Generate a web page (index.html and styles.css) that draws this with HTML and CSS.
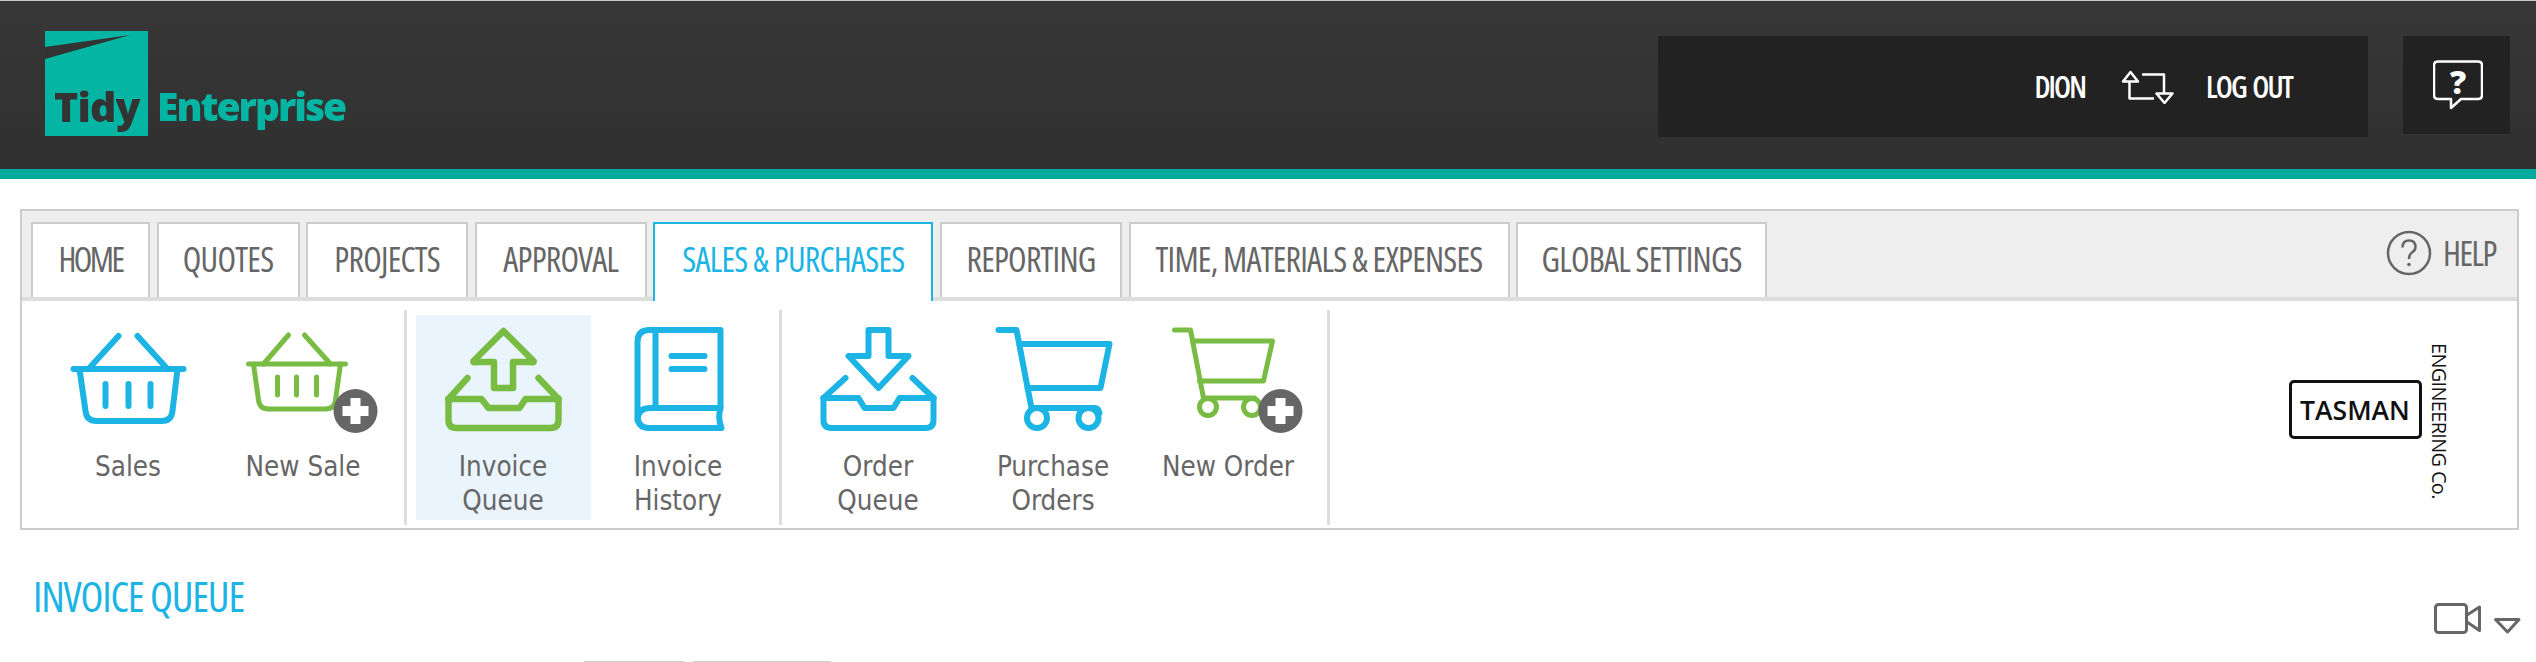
FILE: index.html
```html
<!DOCTYPE html>
<html lang="en">
<head>
<meta charset="utf-8">
<title>Invoice Queue</title>
<link rel="stylesheet" href="styles.css">
</head>
<body>
<header class="topbar">
  <div class="logo">
    <div class="logo-mark">
      <svg class="logo-wedge" viewBox="0 0 103 105"><polygon points="0,16 85,4 0,28" fill="#333"/></svg>
      <span class="logo-tidy">Tidy</span>
    </div>
    <span class="logo-name">Enterprise</span>
  </div>
  <div class="userbox">
    <span class="user-text">DION</span>
    <svg class="swap" viewBox="2123 69 54 34"><g fill="none" stroke="#fff" stroke-width="2.5" stroke-linejoin="round"><path d="M2132.5 71 L2125 80.5 H2140 Z"/><path d="M2131.5 80.5 V97.5 H2156"/><path d="M2144 73.5 H2166 V92"/><path d="M2158.5 92.5 H2174.5 L2166.5 102 Z"/></g></svg>
    <span class="user-text">LOG OUT</span>
  </div>
  <div class="helpbox">
    <div class="bubble">
      <svg class="bubble-shape" viewBox="2433 60 50 50"><path d="M2438 61.5 H2478 Q2482 61.5 2482 65.5 V95 Q2482 99 2478 99 H2461 L2451 108 V99 H2438 Q2434 99 2434 95 V65.5 Q2434 61.5 2438 61.5 Z" fill="none" stroke="#fff" stroke-width="2.5" stroke-linejoin="round"/></svg>
      <span class="bubble-q">?</span>
    </div>
  </div>
</header>

<section class="panel">
  <nav class="tabbar">
    <a class="tab tab-home">HOME</a>
    <a class="tab">QUOTES</a>
    <a class="tab">PROJECTS</a>
    <a class="tab">APPROVAL</a>
    <a class="tab tab-active">SALES &amp; PURCHASES</a>
    <a class="tab">REPORTING</a>
    <a class="tab">TIME, MATERIALS &amp; EXPENSES</a>
    <a class="tab">GLOBAL SETTINGS</a>
    <a class="help-link">
      <svg class="help-icon" viewBox="0 0 46 46"><circle cx="23" cy="23" r="21" fill="none" stroke="#666" stroke-width="2.5"/><path d="M16.5 17.5 Q16.5 10.5 23 10.5 Q29.5 10.5 29.5 17 Q29.5 20.5 26 22.5 Q23 24.5 23 29" fill="none" stroke="#666" stroke-width="2.5"/><circle cx="23" cy="34.5" r="1.8" fill="#666"/></svg>
      <span>HELP</span>
    </a>
  </nav>
  <div class="ribbon">
    <div class="group group-first">
      <a class="item">
        <svg class="item-icon" viewBox="40.5 315 175 135"><g class="ic ic-blue"><path d="M73 369 H183"/><path d="M88 369 L118 336 M137 336 L167 369"/><path d="M79 369 L85 411 Q86 421 96 421 H161 Q171 421 172 411 L177 369"/><path d="M105 384 V406 M128 384 V406 M150 384 V406"/></g></svg>
        <span class="item-label">Sales</span>
      </a>
      <a class="item">
        <svg class="item-icon" viewBox="215.5 315 175 135"><g class="ic ic-green ic-thin"><path d="M248 364 H345"/><path d="M263 364 L288 335 M304 335 L330 364"/><path d="M253 364 L258 400 Q259 409 268 409 H325 Q334 409 335 400 L340 364"/><path d="M277 377 V395 M296 377 V395 M316 377 V395"/></g><circle cx="355" cy="411" r="22" fill="#666"/><path d="M342 411 H368 M355 398 V424" stroke="#fff" stroke-width="10" fill="none"/></svg>
        <span class="item-label">New Sale</span>
      </a>
    </div>
    <div class="group">
      <a class="item item-selected">
        <svg class="item-icon" viewBox="415.5 315 175 135"><g class="ic ic-green ic-bold"><path d="M503 331 L533 361 Q534 363 530 362 H512.5 V388 H493.5 V362 H476 Q472 363 473 361 Z"/><path d="M448 399 H481 L488 408 H519 L525 399 H558"/><path d="M448 399 L467 378 M538 378 L558 399"/><path d="M448 399 V420 Q448 428 456 428 H550 Q558 428 558 420 V399"/></g></svg>
        <span class="item-label">Invoice<br>Queue</span>
      </a>
      <a class="item">
        <svg class="item-icon" viewBox="590.5 315 175 135"><g class="ic ic-blue"><path d="M720 330 H649 Q637 330 637 342 V416 Q637 428 649 428 H721 Q717 418 720 408 V330 Z"/><path d="M655 330 V408 M720 408 H650 Q637 408 637 420"/><path d="M671 356 H704 M671 369 H704"/></g></svg>
        <span class="item-label">Invoice<br>History</span>
      </a>
    </div>
    <div class="group group-last">
      <a class="item">
        <svg class="item-icon" viewBox="790.5 315 175 135"><g class="ic ic-blue"><path d="M868 356 V330 H888 V356 H908 L878 388 L848 356 Z"/><path d="M823 398 H858 L864 408 H893 L899 398 H933"/><path d="M823 398 L845 378 M912 378 L933 398"/><path d="M823 398 V420 Q823 428 831 428 H925 Q933 428 933 420 V398"/></g></svg>
        <span class="item-label">Order<br>Queue</span>
      </a>
      <a class="item">
        <svg class="item-icon" viewBox="965.5 315 175 135"><g class="ic ic-blue"><path d="M998 330 H1016 L1031 408 H1094 Q1098 408 1099 413"/><path d="M1019 344 H1109 L1100 388 H1027"/><circle cx="1036.5" cy="418" r="10"/><circle cx="1088" cy="418" r="10"/></g></svg>
        <span class="item-label">Purchase<br>Orders</span>
      </a>
      <a class="item">
        <svg class="item-icon" viewBox="1140.5 315 175 135"><g class="ic ic-green ic-thin"><path d="M1174 330 H1190 L1203 398 H1254"/><path d="M1192 341 H1272 L1263 381 H1199"/><circle cx="1207.5" cy="407" r="8.5"/><circle cx="1251.5" cy="407" r="8.5"/></g><circle cx="1280" cy="411" r="22" fill="#666"/><path d="M1267 411 H1293 M1280 398 V424" stroke="#fff" stroke-width="10" fill="none"/></svg>
        <span class="item-label">New Order</span>
      </a>
    </div>
    <div class="brand">
      <div class="brand-box">TASMAN</div>
      <div class="brand-side">ENGINEERING Co.</div>
    </div>
  </div>
</section>

<div class="titlebar">
  <h1 class="page-title">INVOICE QUEUE</h1>
  <svg class="video-tools" viewBox="2434 603 88 32"><g fill="none" stroke="#666" stroke-width="3" stroke-linejoin="round"><rect x="2435.5" y="604.5" width="31" height="28" rx="3"/><path d="M2467 615 L2479.5 607 V630.5 L2467 622"/><path d="M2495.5 619.5 H2519 L2507.5 632 Z"/></g></svg>
</div>

<div class="actions">
  <span class="action action-a"></span>
  <span class="action action-b"></span>
</div>
</body>
</html>
```
FILE: styles.css
```css
* { box-sizing: border-box; }
html, body { margin: 0; height: 662px; overflow: hidden; background: #fff; }
body { font-family: "Open Sans", sans-serif; color: #666; }

.topbar {
  display: flex;
  align-items: flex-start;
  height: 179px;
  border-top: 1px solid #ccc;
  border-bottom: 10px solid #04ab9c;
  background: linear-gradient(#373737, #303030);
}
.logo { display: flex; align-items: flex-start; margin: 30px 0 0 45px; filter: blur(.5px); }
.logo-mark { position: relative; width: 103px; height: 105px; background: #04b5a3; padding: 48px 0 0 9px; }
.logo-wedge { position: absolute; left: 0; top: 0; width: 103px; height: 105px; }
.logo-tidy, .logo-name { font-weight: 800; font-size: 39px; line-height: 54px; }
.logo-tidy { position: relative; color: #333; font-size: 41px; letter-spacing: -.8px; }
.logo-name { color: #04b5a3; margin: 48px 0 0 9px; letter-spacing: -2px; }

.userbox {
  display: flex; align-items: center; justify-content: flex-end;
  width: 710px; height: 101px; margin: 35px 0 0 auto; padding-right: 76px;
  background: #222;
}
.user-text { color: #fff; font-size: 30px; font-weight: 600; font-stretch: 75%; letter-spacing: -1.9px; word-spacing: 3px; line-height: 40px; }
.swap { width: 54px; height: 34px; margin: 0 31px 0 36px; }
.helpbox {
  display: flex; justify-content: center; align-items: center;
  width: 107px; height: 98px; margin: 35px 26px 0 35px;
  background: #222;
}
.bubble { position: relative; display: flex; justify-content: center; width: 50px; height: 50px; margin-left: 3px; }
.bubble-shape { position: absolute; left: 0; top: 0; width: 50px; height: 50px; }
.bubble-q { position: relative; color: #fff; font-weight: 800; font-size: 32px; line-height: 43px; }

.panel { height: 321px; margin: 30px 17px 0 20px; border: 2px solid #ccc; }
.tabbar {
  display: grid;
  grid-template-columns: 119px 143px 162px 172px 280px 182px 381px 251px 1fr;
  column-gap: 6.6px;
  align-items: start;
  height: 90px; padding: 11px 0 0 9px;
  background: #eee; border-bottom: 4px solid #ddd;
}
.tab {
  display: flex; align-items: center; justify-content: center;
  height: 75px; padding-bottom: 3px;
  background: #fff; border: solid #ccc; border-width: 2px 2px 0;
  font-size: 34px; font-stretch: 75%; letter-spacing: -.75px; color: #666; line-height: 40px; white-space: nowrap;
}
.tab-home { letter-spacing: -2.5px; }
.tab-active { height: 79px; padding-bottom: 7px; color: #1bb4e4; border-color: #1bb4e4; }
.help-link { display: flex; align-items: center; justify-content: flex-end; gap: 11px; margin: 8px 21px 0 0; font-size: 34px; font-stretch: 75%; letter-spacing: -1.5px; line-height: 46px; }
.help-icon { width: 46px; height: 46px; }

.ribbon { display: flex; height: 227px; padding: 9px 69.5px 0 0; }
.group { display: flex; height: 215px; padding: 5px 13px 0 9px; border-right: 3px solid #ddd; }
.group-first { margin-left: 18.5px; padding-left: 0; }
.group-last { padding-right: 11px; }
.item {
  display: block; width: 175px; height: 205px;
  font-family: "DejaVu Sans", sans-serif; font-stretch: condensed; font-size: 27.5px; line-height: 34px; text-align: center; color: #666;
}
.item-selected { background: #e9f4fc; }
.item-icon { display: block; width: 175px; height: 135px; }
.item-label { display: block; margin-top: -1.5px; }

.ic { fill: none; stroke-width: 6; stroke-linecap: round; stroke-linejoin: round; }
.ic-blue { stroke: #1bb4e4; }
.ic-green { stroke: #78bc43; }
.ic-thin { stroke-width: 5; }
.ic-bold { stroke-width: 6.5; }

.brand { display: flex; align-items: flex-start; margin-left: auto; }
.brand-box {
  display: flex; align-items: center; justify-content: center;
  width: 133px; height: 59px; margin-top: 70px;
  border: 3px solid #111; border-radius: 5px;
  font-size: 26.5px; font-weight: 600; color: #111;
}
.brand-side {
  writing-mode: vertical-rl;
  margin: 33px 0 0 8px;
  font-size: 20px; line-height: 18px; letter-spacing: -.7px; font-weight: 500; color: #111; white-space: nowrap;
}

.titlebar { display: flex; justify-content: space-between; align-items: flex-start; height: 131px; padding: 0 14px 0 33px; }
.page-title { margin: 38px 0 0; font-size: 42px; font-weight: 500; font-stretch: 75%; letter-spacing: -1.2px; line-height: 56px; color: #1bb4e4; }
.video-tools { width: 88px; height: 32px; margin-top: 73px; }

.actions { display: flex; gap: 9px; padding-left: 584px; }
.action { display: block; height: 1px; background: #ccc; }
.action-a { width: 100px; }
.action-b { width: 138px; }
```
